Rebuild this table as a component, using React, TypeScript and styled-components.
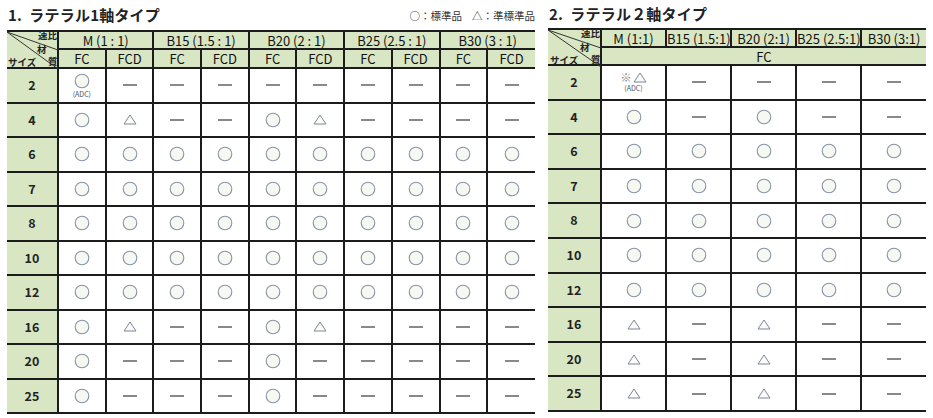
import styled, { createGlobalStyle } from 'styled-components';

const GlobalStyle = createGlobalStyle`
  body {
    margin: 0;
    background: #fff;
    font-family: "Noto Sans CJK JP", "Noto Sans", sans-serif;
    color: #222;
  }
`;

const Page = styled.div`
  display: flex;
  align-items: flex-start;
  gap: 13px;
  padding-left: 7px;
`;

const Section = styled.section<{ $width: number }>`
  width: ${(p) => p.$width}px;
  display: flex;
  flex-direction: column;
`;

const TitleBar = styled.div<{ $height: number }>`
  height: ${(p) => p.$height}px;
  display: flex;
  align-items: center;
  justify-content: space-between;
`;

const Title = styled.h2`
  margin: 0 0 2px;
  font-size: 15px;
  font-weight: 700;
  letter-spacing: 0.2px;
  color: #222;
  padding-left: 1px;
  white-space: pre;
`;

const Legend = styled.div`
  display: flex;
  gap: 10px;
  font-size: 10.5px;
  color: #333;
`;

const Table = styled.table`
  border-collapse: collapse;
  table-layout: fixed;
  width: 100%;

  td, th {
    border: 2px solid #1c1c1c;
    padding: 0;
    text-align: center;
    vertical-align: middle;
    line-height: 1;
  }
  tr > :first-child {
    border-left: none;
  }
  tr > :last-child {
    border-right: none;
  }
`;

const HeadCell = styled.th<{ $height: number }>`
  height: ${(p) => p.$height}px;
  background: #d9e6c4;
  font-size: 13px;
  font-weight: 400;
  color: #111;
  white-space: nowrap;
`;

const Corner = styled.th`
  position: relative;
  background: #d9e6c4;
`;

const CornerLabel = styled.span<{ $x: number; $y: number }>`
  position: absolute;
  left: ${(p) => p.$x}px;
  top: ${(p) => p.$y}px;
  font-size: 9.5px;
  font-weight: 700;
  line-height: 1;
  color: #222;
`;

const SizeCell = styled.td<{ $height: number }>`
  height: ${(p) => p.$height}px;
  background: #d9e6c4;
  font-size: 12.5px;
  font-weight: 700;
  color: #222;
`;

const Cell = styled.td`
  background: #fff;
`;

const Mark = styled.div`
  display: flex;
  flex-direction: column;
  align-items: center;
  justify-content: center;
  line-height: 1;
`;

const MarkRow = styled.div`
  display: flex;
  align-items: center;
`;

const Note = styled.span`
  font-size: 7px;
  color: #4a5168;
  margin-top: 2px;
`;

const Kome = styled.span`
  font-size: 11px;
  color: #7c8498;
  margin-right: 1px;
`;

type Sym = 'O' | 'T' | '-' | 'OA' | 'KTA';

const Circle = () => (
  <svg width="16" height="16" viewBox="0 0 16 16">
    <circle cx="8" cy="8" r="6.8" fill="#f6f8f2" stroke="#8893a6" strokeWidth="1.1" />
  </svg>
);

const Triangle = () => (
  <svg width="14" height="11" viewBox="0 0 14 11">
    <polygon points="7,1 13,10 1,10" fill="#fbfbfb" stroke="#7d8596" strokeWidth="1" />
  </svg>
);

const Dash = () => (
  <svg width="16" height="4" viewBox="0 0 16 4">
    <line x1="1" y1="2" x2="15" y2="2" stroke="#3a3a3a" strokeWidth="1.2" />
  </svg>
);

const Symbol = ({ s }: { s: Sym }) => {
  if (s === 'O') return <Mark><Circle /></Mark>;
  if (s === 'T') return <Mark><Triangle /></Mark>;
  if (s === 'OA')
    return (
      <Mark>
        <Circle />
        <Note>(ADC)</Note>
      </Mark>
    );
  if (s === 'KTA')
    return (
      <Mark>
        <MarkRow>
          <Kome>※</Kome>
          <Triangle />
        </MarkRow>
        <Note>(ADC)</Note>
      </Mark>
    );
  return <Mark><Dash /></Mark>;
};

const CornerLines = ({ w, h, mid }: { w: number; h: number; mid: number }) => (
  <svg
    width={w}
    height={h}
    viewBox={`0 0 ${w} ${h}`}
    style={{ position: 'absolute', left: 0, top: 0 }}
  >
    <line x1="0" y1="0" x2={w} y2={mid} stroke="#333" strokeWidth="1" />
    <line x1="0" y1="0" x2={w} y2={h} stroke="#333" strokeWidth="1" />
  </svg>
);

const sizes = ['2', '4', '6', '7', '8', '10', '12', '16', '20', '25'];

const all = (n: number): Sym[] => Array(n).fill('O');

const lateral1: Sym[][] = [
  ['OA', '-', '-', '-', '-', '-', '-', '-', '-', '-'],
  ['O', 'T', '-', '-', 'O', 'T', '-', '-', '-', '-'],
  all(10),
  all(10),
  all(10),
  all(10),
  all(10),
  ['O', 'T', '-', '-', 'O', 'T', '-', '-', '-', '-'],
  ['O', '-', '-', '-', 'O', '-', '-', '-', '-', '-'],
  ['O', '-', '-', '-', 'O', '-', '-', '-', '-', '-'],
];

const lateral2: Sym[][] = [
  ['KTA', '-', '-', '-', '-'],
  ['O', '-', 'O', '-', '-'],
  all(5),
  all(5),
  all(5),
  all(5),
  all(5),
  ['T', '-', 'T', '-', '-'],
  ['T', '-', 'T', '-', '-'],
  ['T', '-', 'T', '-', '-'],
];

const ratios1 = ['M (1 : 1)', 'B15 (1.5 : 1)', 'B20 (2 : 1)', 'B25 (2.5 : 1)', 'B30 (3 : 1)'];
const ratios2 = ['M (1:1)', 'B15 (1.5:1)', 'B20 (2:1)', 'B25 (2.5:1)', 'B30 (3:1)'];

export default function App() {
  return (
    <>
      <GlobalStyle />
      <Page>
        <Section $width={528}>
          <TitleBar $height={30}>
            <Title>{'1.  ラテラル1軸タイプ'}</Title>
            <Legend>
              <span>○：標準品</span>
              <span>△：準標準品</span>
            </Legend>
          </TitleBar>
          <Table>
            <colgroup>
              <col style={{ width: 51 }} />
              {Array.from({ length: 10 }).map((_, i) => (
                <col key={i} />
              ))}
            </colgroup>
            <thead>
              <tr>
                <Corner rowSpan={2}>
                  <CornerLines w={51} h={37} mid={18} />
                  <CornerLabel $x={31} $y={-1}>速比</CornerLabel>
                  <CornerLabel $x={30} $y={13}>材</CornerLabel>
                  <CornerLabel $x={41} $y={25}>質</CornerLabel>
                  <CornerLabel $x={1} $y={26}>サイズ</CornerLabel>
                </Corner>
                {ratios1.map((r) => (
                  <HeadCell key={r} colSpan={2} $height={16}>{r}</HeadCell>
                ))}
              </tr>
              <tr>
                {ratios1.flatMap((r) => [
                  <HeadCell key={r + 'fc'} $height={17}>FC</HeadCell>,
                  <HeadCell key={r + 'fcd'} $height={17}>FCD</HeadCell>,
                ])}
              </tr>
            </thead>
            <tbody>
              {lateral1.map((row, i) => (
                <tr key={sizes[i]}>
                  <SizeCell $height={32.5}>{sizes[i]}</SizeCell>
                  {row.map((s, j) => (
                    <Cell key={j}>
                      <Symbol s={s} />
                    </Cell>
                  ))}
                </tr>
              ))}
            </tbody>
          </Table>
        </Section>

        <Section $width={378}>
          <TitleBar $height={28}>
            <Title>{'2.  ラテラル２軸タイプ'}</Title>
          </TitleBar>
          <Table>
            <colgroup>
              <col style={{ width: 53 }} />
              {Array.from({ length: 5 }).map((_, i) => (
                <col key={i} />
              ))}
            </colgroup>
            <thead>
              <tr>
                <Corner rowSpan={2}>
                  <CornerLines w={53} h={37} mid={18} />
                  <CornerLabel $x={33} $y={-1}>速比</CornerLabel>
                  <CornerLabel $x={32} $y={13}>材</CornerLabel>
                  <CornerLabel $x={43} $y={25}>質</CornerLabel>
                  <CornerLabel $x={2} $y={26}>サイズ</CornerLabel>
                </Corner>
                {ratios2.map((r) => (
                  <HeadCell key={r} $height={16}>{r}</HeadCell>
                ))}
              </tr>
              <tr>
                <HeadCell colSpan={5} $height={16}>FC</HeadCell>
              </tr>
            </thead>
            <tbody>
              {lateral2.map((row, i) => (
                <tr key={sizes[i]}>
                  <SizeCell $height={32.6}>{sizes[i]}</SizeCell>
                  {row.map((s, j) => (
                    <Cell key={j}>
                      <Symbol s={s} />
                    </Cell>
                  ))}
                </tr>
              ))}
            </tbody>
          </Table>
        </Section>
      </Page>
    </>
  );
}
